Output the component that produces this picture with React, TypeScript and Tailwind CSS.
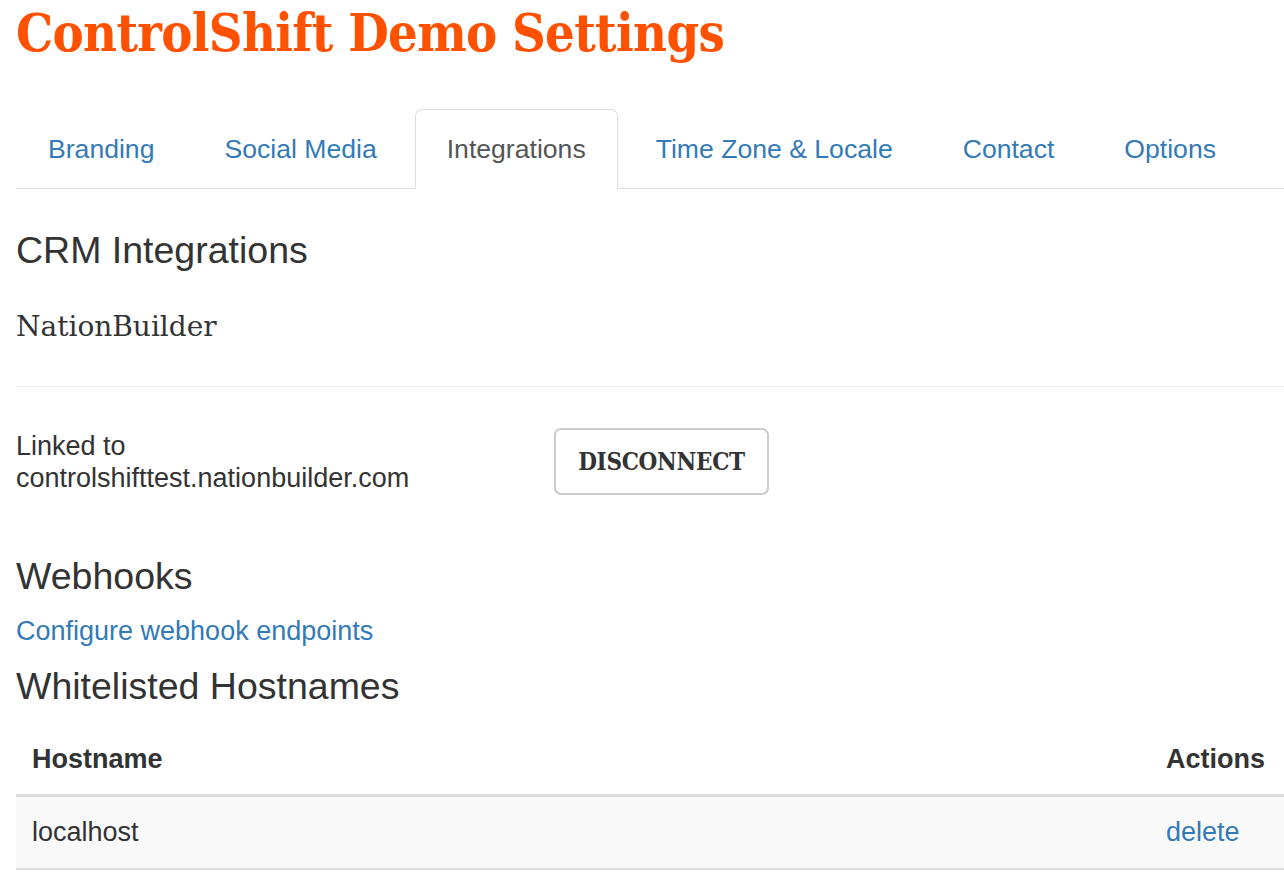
import React from "react";

const tabs = ["Branding", "Social Media", "Integrations", "Time Zone & Locale", "Contact", "Options"];

export default function App() {
  return (
    <div className="bg-white text-[#333] pl-4 min-h-[874px] overflow-hidden" style={{ fontFamily: '"Liberation Sans", Arial, sans-serif' }}>
      <h1
        className="m-0 text-[52px] leading-[66px] font-bold text-[#ff5100] tracking-[-0.7px]"
        style={{ fontFamily: '"DejaVu Serif", serif', fontStretch: "condensed" }}
      >
        ControlShift Demo Settings
      </h1>

      <ul className="mt-[43px] flex border-b border-[#ddd] list-none p-0 m-0">
        {tabs.map((t) => {
          const active = t === "Integrations";
          return (
            <li key={t} className="-mb-px mr-[6px]">
              <a
                className={
                  "block px-[31px] py-[22px] text-[26.6px] leading-[34px] border rounded-t-[7px] " +
                  (active ? "border-[#ddd] border-b-white bg-white text-[#555]" : "border-transparent text-[#337ab7]")
                }
              >
                {t}
              </a>
            </li>
          );
        })}
      </ul>

      <h3 className="mt-[39px] text-[37.5px] leading-[44px] font-normal">CRM Integrations</h3>

      <div className="mt-[35px] text-[28px] leading-[40px] text-[#333]" style={{ fontFamily: '"DejaVu Serif", serif' }}>
        NationBuilder
      </div>

      <hr className="mt-[39px] border-0 border-t border-[#eee]" />

      <div className="mt-[41px] flex items-center h-[67px]">
        <div className="w-[538px] text-[27px] leading-[32px]">
          <div>Linked to</div>
          <div>controlshifttest.nationbuilder.com</div>
        </div>
        <button
          className="w-[215px] h-[67px] border-2 border-[#ccc] rounded-[7px] bg-white text-[#333] text-[24px] font-bold uppercase tracking-[-0.3px]"
          style={{ fontFamily: '"DejaVu Serif", serif', fontStretch: "condensed" }}
        >
          Disconnect
        </button>
      </div>

      <h3 className="mt-[59px] text-[37.5px] leading-[44px] font-normal">Webhooks</h3>
      <a className="mt-[17px] block text-[27px] leading-[32px] text-[#337ab7]">Configure webhook endpoints</a>
      <h3 className="mt-[17px] text-[37.5px] leading-[44px] font-normal">Whitelisted Hostnames</h3>

      <table className="mt-[16px] w-full border-collapse text-[27px] leading-[32px]">
        <thead>
          <tr className="border-b-[3px] border-[#ddd]">
            <th className="h-[71px] pl-4 text-left font-bold align-middle">Hostname</th>
            <th className="h-[71px] w-[134px] pl-4 text-left font-bold align-middle">Actions</th>
          </tr>
        </thead>
        <tbody>
          <tr className="bg-[#f9f9f9] border-b-2 border-[#ddd]">
            <td className="h-[74px] pl-4 align-middle">localhost</td>
            <td className="h-[74px] pl-4 align-middle text-[#337ab7]">delete</td>
          </tr>
        </tbody>
      </table>
    </div>
  );
}
